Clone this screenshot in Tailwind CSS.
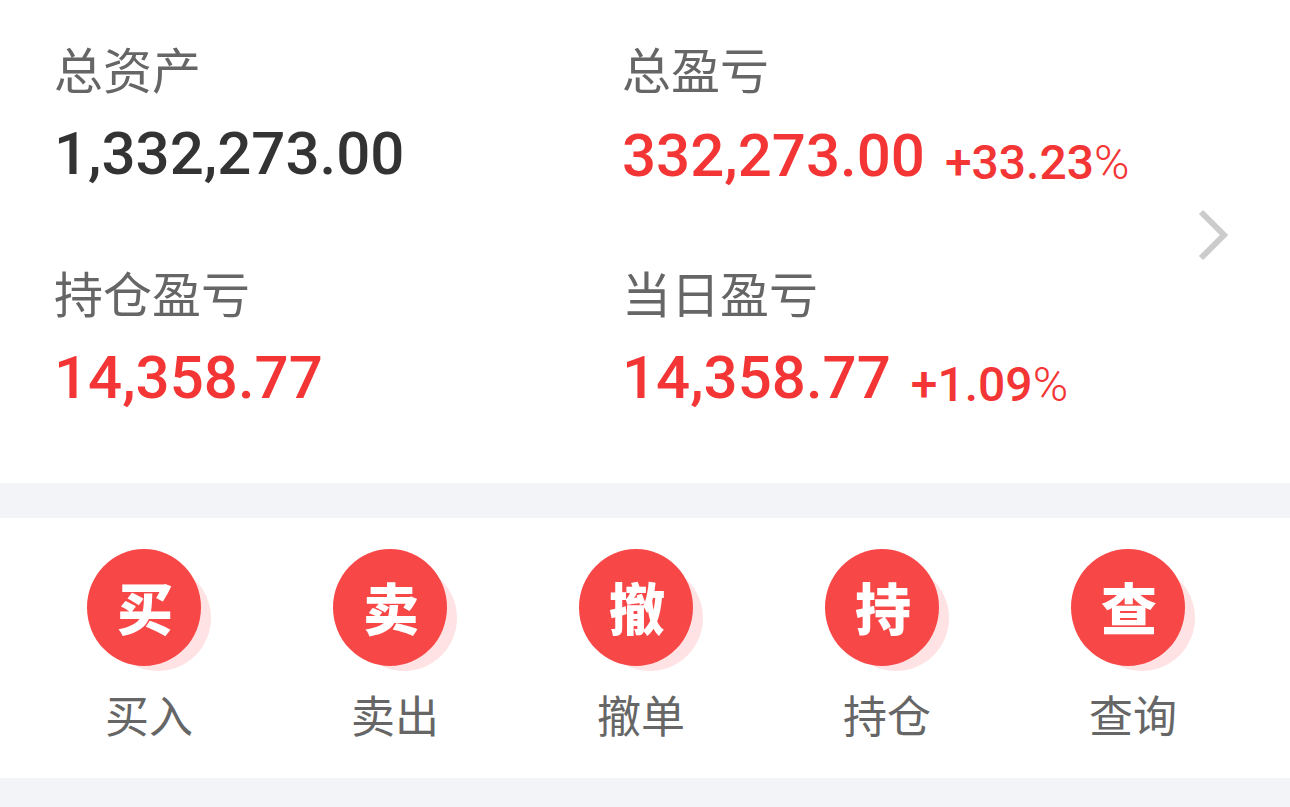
<!DOCTYPE html>
<html lang="zh-CN">
<head>
    <meta charset="UTF-8">
    <meta name="viewport" content="width=device-width, initial-scale=1.0">
    <title>模拟交易</title>
    <script src="https://cdn.jsdelivr.net/npm/@tailwindcss/browser@4"></script>
</head>
<body class="min-h-screen bg-[#f3f4f8] font-['Noto_Sans_CJK_SC',sans-serif] text-[#666666]">

    <!-- Account summary -->
    <section class="flex items-center bg-white pt-11 pb-[73px] pl-[54px] pr-[60px]">
        <dl class="grid flex-1 grid-cols-2 gap-y-20">
            <div class="space-y-[30px]">
                <dt class="text-[49px] leading-[48px] font-normal">总资产</dt>
                <dd class="font-['Roboto',sans-serif] text-[60px] leading-[64px] font-medium text-[#333333]">1,332,273.00</dd>
            </div>
            <div class="space-y-8">
                <dt class="text-[49px] leading-[48px] font-normal">总盈亏</dt>
                <dd class="flex items-end gap-5 whitespace-nowrap font-['Roboto',sans-serif] text-[60px] leading-[64px] font-medium text-[#f33535]">
                    <span>332,273.00</span>
                    <span class="text-[48px] leading-[50px]">+33.23<span class="font-light">%</span></span>
                </dd>
            </div>
            <div class="space-y-[30px]">
                <dt class="text-[49px] leading-[48px] font-normal">持仓盈亏</dt>
                <dd class="font-['Roboto',sans-serif] text-[60px] leading-[64px] font-medium text-[#f33535]">14,358.77</dd>
            </div>
            <div class="space-y-[30px]">
                <dt class="text-[49px] leading-[48px] font-normal">当日盈亏</dt>
                <dd class="flex items-end gap-5 whitespace-nowrap font-['Roboto',sans-serif] text-[60px] leading-[64px] font-medium text-[#f33535]">
                    <span>14,358.77</span>
                    <span class="text-[48px] leading-[50px]">+1.09<span class="font-light">%</span></span>
                </dd>
            </div>
        </dl>
        <a href="#" class="mt-4 pl-2" aria-label="账户详情">
            <svg class="h-[54px] w-8" viewBox="0 0 32 54" fill="none" stroke="#cccccc" stroke-width="6">
                <path d="M3 4 L26 27 L3 50"/>
            </svg>
        </a>
    </section>

    <!-- Trade actions -->
    <nav class="mt-[35px] grid grid-cols-5 bg-white pt-[31px] pb-[38px] pl-[26px] pr-[34px]">
        <button class="flex flex-col items-center gap-[17px]">
            <svg class="h-[122px] w-[125px]" viewBox="0 0 125 122" aria-hidden="true">
                <circle cx="71" cy="69" r="53" fill="#ffe3e4"/>
                <ellipse cx="57" cy="58.5" rx="57" ry="58.5" fill="#f84747"/>
                <text x="58" y="81" text-anchor="middle" class="fill-white text-[56px] font-black">买</text>
            </svg>
            <span class="text-[44px] leading-[52px] font-normal">买入</span>
        </button>
        <button class="flex flex-col items-center gap-[17px]">
            <svg class="h-[122px] w-[125px]" viewBox="0 0 125 122" aria-hidden="true">
                <circle cx="71" cy="69" r="53" fill="#ffe3e4"/>
                <ellipse cx="57" cy="58.5" rx="57" ry="58.5" fill="#f84747"/>
                <text x="58" y="81" text-anchor="middle" class="fill-white text-[56px] font-black">卖</text>
            </svg>
            <span class="text-[44px] leading-[52px] font-normal">卖出</span>
        </button>
        <button class="flex flex-col items-center gap-[17px]">
            <svg class="h-[122px] w-[125px]" viewBox="0 0 125 122" aria-hidden="true">
                <circle cx="71" cy="69" r="53" fill="#ffe3e4"/>
                <ellipse cx="57" cy="58.5" rx="57" ry="58.5" fill="#f84747"/>
                <text x="58" y="81" text-anchor="middle" class="fill-white text-[56px] font-black">撤</text>
            </svg>
            <span class="text-[44px] leading-[52px] font-normal">撤单</span>
        </button>
        <button class="flex flex-col items-center gap-[17px]">
            <svg class="h-[122px] w-[125px]" viewBox="0 0 125 122" aria-hidden="true">
                <circle cx="71" cy="69" r="53" fill="#ffe3e4"/>
                <ellipse cx="57" cy="58.5" rx="57" ry="58.5" fill="#f84747"/>
                <text x="58" y="81" text-anchor="middle" class="fill-white text-[56px] font-black">持</text>
            </svg>
            <span class="text-[44px] leading-[52px] font-normal">持仓</span>
        </button>
        <button class="flex flex-col items-center gap-[17px]">
            <svg class="h-[122px] w-[125px]" viewBox="0 0 125 122" aria-hidden="true">
                <circle cx="71" cy="69" r="53" fill="#ffe3e4"/>
                <ellipse cx="57" cy="58.5" rx="57" ry="58.5" fill="#f84747"/>
                <text x="58" y="81" text-anchor="middle" class="fill-white text-[56px] font-black">查</text>
            </svg>
            <span class="text-[44px] leading-[52px] font-normal">查询</span>
        </button>
    </nav>

</body>
</html>
